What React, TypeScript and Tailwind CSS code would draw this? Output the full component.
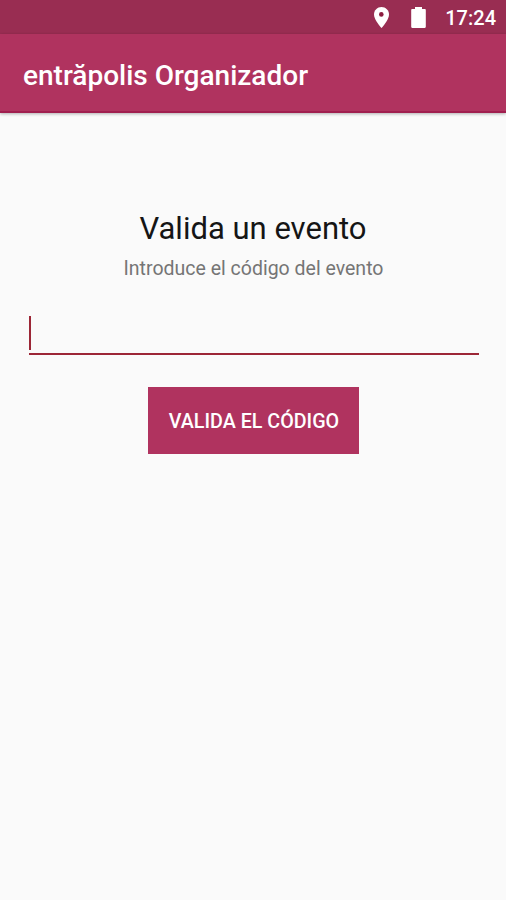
function LocationIcon() {
  return (
    <svg viewBox="0 0 15 21" className="h-[21px] w-[15px]" aria-hidden="true">
      <path
        className="fill-white"
        d="M7.5 0C3.36 0 0 3.3 0 7.4 0 12.9 7.5 21 7.5 21S15 12.9 15 7.4C15 3.3 11.64 0 7.5 0z"
      />
      <circle cx="7.3" cy="7.4" r="2.3" className="fill-[#8c1c3f]" />
    </svg>
  );
}

function BatteryIcon() {
  return (
    <svg viewBox="0 0 15 21" className="h-[21px] w-[15px] fill-white" aria-hidden="true">
      <path d="M13.7 2H11V0H4v2H1.3C.6 2 .2 2.5.2 3.2v16.6c0 .7.4 1.2 1.1 1.2h12.4c.7 0 1.1-.5 1.1-1.2V3.2c0-.7-.4-1.2-1.1-1.2z" />
    </svg>
  );
}

export default function App() {
  return (
    <div className="flex h-[900px] w-[506px] flex-col bg-[#fafafa] font-['Roboto',sans-serif]">
      <div className="flex h-[34px] items-center justify-end bg-[#992d52] pt-px pr-[10px] text-white">
        <LocationIcon />
        <span className="ml-[22px]">
          <BatteryIcon />
        </span>
        <span className="ml-[19px] pt-px text-[20px] font-medium leading-none">17:24</span>
      </div>

      <header className="flex h-[79px] items-center border-b-2 border-[#a01f4f] bg-[#b0335f] pt-[6px] pl-[23px] shadow-[0_1px_3px_rgba(0,0,0,0.3)]">
        <h1 className="text-[28px] font-medium leading-none text-white">entrăpolis Organizador</h1>
      </header>

      <main className="flex flex-col items-center px-[28px] pt-[97px]">
        <h2 className="text-[31px] leading-[38px] text-[#151515]">Valida un evento</h2>
        <p className="mt-[9px] ml-px text-[19.5px] leading-[24px] text-[#757575]">Introduce el código del evento</p>
        <div className="mt-[35px] ml-px flex h-[39px] w-[450px] border-b-2 border-[#9c2636]">
          <span className="h-[34px] w-[2px] bg-[#9c2636]" />
        </div>
        <button className="mt-[32px] h-[67px] w-[211px] bg-[#b0335f] pt-[3px] pl-[2px] text-[19.7px] font-medium text-white">
          VALIDA EL CÓDIGO
        </button>
      </main>
    </div>
  );
}
